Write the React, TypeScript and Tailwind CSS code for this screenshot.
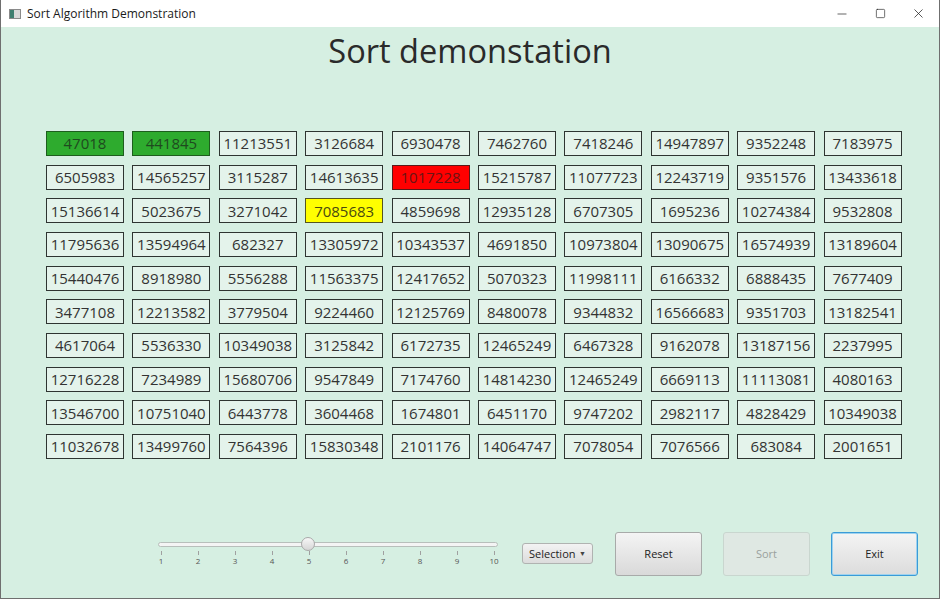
import { Minus, Square, X } from "lucide-react";

const values: number[][] = [
  [47018, 441845, 11213551, 3126684, 6930478, 7462760, 7418246, 14947897, 9352248, 7183975],
  [6505983, 14565257, 3115287, 14613635, 1017228, 15215787, 11077723, 12243719, 9351576, 13433618],
  [15136614, 5023675, 3271042, 7085683, 4859698, 12935128, 6707305, 1695236, 10274384, 9532808],
  [11795636, 13594964, 682327, 13305972, 10343537, 4691850, 10973804, 13090675, 16574939, 13189604],
  [15440476, 8918980, 5556288, 11563375, 12417652, 5070323, 11998111, 6166332, 6888435, 7677409],
  [3477108, 12213582, 3779504, 9224460, 12125769, 8480078, 9344832, 16566683, 9351703, 13182541],
  [4617064, 5536330, 10349038, 3125842, 6172735, 12465249, 6467328, 9162078, 13187156, 2237995],
  [12716228, 7234989, 15680706, 9547849, 7174760, 14814230, 12465249, 6669113, 11113081, 4080163],
  [13546700, 10751040, 6443778, 3604468, 1674801, 6451170, 9747202, 2982117, 4828429, 10349038],
  [11032678, 13499760, 7564396, 15830348, 2101176, 14064747, 7078054, 7076566, 683084, 2001651],
];

const cellStyle = (r: number, c: number) => {
  if (r === 0 && (c === 0 || c === 1)) return "bg-[#2eab2e] border-[#1d5e1d] text-[#1f4a1f]";
  if (r === 1 && c === 4) return "bg-[#ff0000] border-[#5a1a1a] text-[#6b1414]";
  if (r === 2 && c === 3) return "bg-[#ffff00] border-[#555520] text-[#4a4a10]";
  return "bg-[#e4f3eb] border-[#2e3431] text-[#333333]";
};

const TitleBar = () => (
  <div className="flex h-[27px] items-center bg-white">
    <div className="ml-[8px] flex h-[10px] w-[12px] items-stretch border border-[#8a8a8a] bg-[#d8d8d8]">
      <div className="w-[4px] bg-[#3f7f70]" />
    </div>
    <span className="ml-[6px] text-[12px] text-[#1a1a1a]">Sort Algorithm Demonstration</span>
    <div className="ml-auto flex h-full items-center text-[#222]">
      <div className="flex w-[38px] justify-center">
        <Minus size={14} strokeWidth={1.2} />
      </div>
      <div className="flex w-[38px] justify-center">
        <Square size={11} strokeWidth={1.4} />
      </div>
      <div className="mr-[2px] flex w-[38px] justify-center">
        <X size={15} strokeWidth={1.2} />
      </div>
    </div>
  </div>
);

const Slider = () => {
  const ticks = [1, 2, 3, 4, 5, 6, 7, 8, 9, 10];
  return (
    <div className="relative h-[36px] w-[348px]">
      <div className="absolute left-[3px] top-[8px] h-[5px] w-[340px] rounded-full border border-[#b8bfbb] bg-[#f4f4f4]" />
      <div className="absolute left-[146px] top-[3px] h-[14px] w-[14px] rounded-full border border-[#a9a9a9] bg-gradient-to-b from-[#f7f7f7] to-[#d6d6d6]" />
      <div className="absolute left-0 top-[17px] flex w-[345px] justify-between px-[1px]">
        {ticks.map((t) => (
          <div key={t} className="flex w-[10px] flex-col items-center">
            <div className="h-[4px] w-px bg-[#a0a0a0]" />
            <span className="mt-[2px] text-[8px] leading-none text-[#555]">{t}</span>
          </div>
        ))}
      </div>
    </div>
  );
};

const Button = ({ label, disabled, focused }: { label: string; disabled?: boolean; focused?: boolean }) => (
  <div
    className={
      "flex h-[44px] w-[87px] items-center justify-center rounded-[3px] border text-[11px] " +
      (disabled
        ? "border-[#c9d6cf] bg-[#dfe8e3] text-[#9aa19d]"
        : focused
          ? "border-[#3a9bd8] bg-gradient-to-b from-[#f4f4f4] to-[#dcdcdc] text-[#222] shadow-[inset_0_0_0_1px_#9fd2ee]"
          : "border-[#a8aaa9] bg-gradient-to-b from-[#f4f4f4] to-[#d9d9d9] text-[#222]")
    }
  >
    {label}
  </div>
);

export default function App() {
  return (
    <div
      className="flex h-[599px] w-[940px] flex-col overflow-hidden border-x border-b border-[#6f6f6f]"
      style={{ fontFamily: '"Open Sans", "Noto Sans", sans-serif' }}
    >
      <TitleBar />
      <div className="flex flex-1 flex-col bg-[#d6efe2]">
        <h1 className="mt-[2px] text-center text-[32.6px] leading-[44px] text-[#2a2a2a]">Sort demonstation</h1>

        <div className="ml-[45px] mt-[58px] grid grid-cols-[repeat(10,78px)] gap-x-[8.4px] gap-y-[8.67px]">
          {values.map((row, r) =>
            row.map((v, c) => (
              <div
                key={r + "-" + c}
                className={"flex h-[25px] items-center justify-center border text-[15px] " + cellStyle(r, c)}
              >
                {v}
              </div>
            ))
          )}
        </div>

        <div className="ml-[154px] mt-[73px] flex items-center">
          <div className="-mt-[4px]">
            <Slider />
          </div>
          <div className="ml-[19px] flex h-[21px] w-[71px] items-center justify-between rounded-[3px] border border-[#b0b3b1] bg-gradient-to-b from-[#f3f3f3] to-[#dcdcdc] px-[6px] text-[11px] text-[#222]">
            <span>Selection</span>
            <span className="text-[7px] text-[#444]">▼</span>
          </div>
          <div className="ml-[22px]">
            <Button label="Reset" />
          </div>
          <div className="ml-[21px]">
            <Button label="Sort" disabled />
          </div>
          <div className="ml-[21px]">
            <Button label="Exit" focused />
          </div>
        </div>
      </div>
    </div>
  );
}
